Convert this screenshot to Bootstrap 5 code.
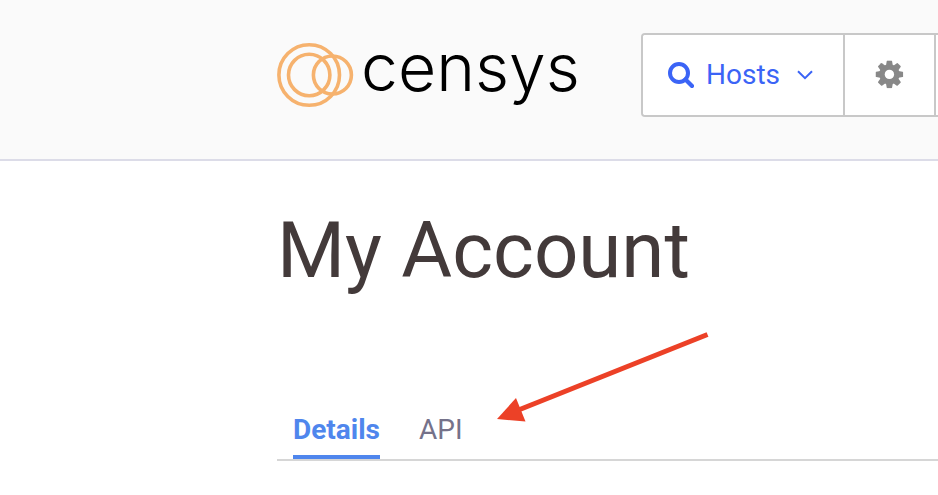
<!DOCTYPE html>
<html lang="en">
<head>
<meta charset="utf-8">
<meta name="viewport" content="width=device-width, initial-scale=1">
<title>My Account</title>
<link href="https://cdn.jsdelivr.net/npm/bootstrap@5.3.0/dist/css/bootstrap.min.css" rel="stylesheet">
<style>
  body { font-family: Roboto, "Liberation Sans", sans-serif; font-size: 28px; line-height: 36px; background: #fff; }
  .site-header { background: #fafafa; border-bottom: 2px solid #dcdce8; padding: 33px 0 42px 277px; }
  .brand { width: 364px; gap: 6px; color: #000; }
  .brand:hover { color: #000; }
  .wordmark { font-family: Inter, "DejaVu Sans", sans-serif; font-weight: 300; font-size: 66px; line-height: 68px; padding-bottom: 16px; }
  .search-group { height: 84px; border: 2px solid #c8c8c8; border-right: 0; border-radius: 4px 0 0 4px; background: #fff; min-width: 0; overflow: hidden; }
  .search-group button { border: 0; border-right: 2px solid #c8c8c8; background: #fff; }
  .hosts-btn { padding: 0 30px 0 25px; color: #3b64f6; }
  .hosts-btn span { margin: 0 17px 0 12px; }
  .gear-btn { width: 91px; }
  .search-group input { border: 0; padding: 0; min-width: 0; width: 0; }
  .page-main { padding: 46px 0 0 277px; }
  .page-title { font-size: 78px; line-height: 88px; font-weight: 450; color: #433a3a; }
  .account-tabs { margin-top: 110px; padding-left: 16px; gap: 39px; border-bottom: 2px solid #d6d6d6; }
  .account-tabs a { padding: 7px 0; border-bottom: 4px solid transparent; color: #75728a; text-decoration: none; }
  .account-tabs a.active { color: #4f86ed; font-weight: 700; border-color: #4f86ed; }
  .pointer-arrow { left: 490px; top: 325px; pointer-events: none; }
</style>
<script src="https://cdn.jsdelivr.net/npm/bootstrap@5.3.0/dist/js/bootstrap.bundle.min.js"></script>
</head>
<body class="position-relative">
<header class="site-header d-flex">
  <a href="#" class="brand d-flex align-items-center flex-shrink-0 text-decoration-none">
    <svg width="78" height="66" viewBox="0 0 78 66" fill="none" stroke="#f6b26e" stroke-width="3.6" aria-hidden="true">
      <circle cx="32.2" cy="33" r="30.3"/><circle cx="32.2" cy="33" r="20.7"/><circle cx="55.4" cy="33" r="19"/>
    </svg>
    <span class="wordmark">censys</span>
  </a>
  <form class="search-group d-flex flex-fill">
    <button type="button" class="hosts-btn d-flex align-items-center flex-shrink-0">
      <svg width="26" height="26" viewBox="0 0 26 26" fill="none" stroke="currentColor" aria-hidden="true">
        <circle cx="11" cy="11" r="9" stroke-width="4"/><path d="M17.5 17.5 24 24" stroke-width="4.2" stroke-linecap="round"/>
      </svg>
      <span>Hosts</span>
      <svg width="16" height="10" viewBox="0 0 16 10" fill="none" stroke="currentColor" stroke-width="2" aria-hidden="true"><path d="M1 1.2 8 8.2 15 1.2"/></svg>
    </button>
    <button type="button" class="gear-btn d-flex align-items-center justify-content-center flex-shrink-0 p-0" aria-label="Search settings">
      <svg width="30" height="30" viewBox="-14.4 -14.4 30 30" fill="#888" aria-hidden="true">
        <defs><mask id="hub"><rect x="-14" y="-14" width="28" height="28" fill="#fff"/><circle r="4.7" fill="#000"/></mask></defs>
        <g mask="url(#hub)">
          <circle r="10.2"/>
          <path id="tooth" d="M-3.4-9-2.7-13.2Q-2.6-13.8-2-13.8H2Q2.6-13.8 2.7-13.2L3.4-9Z"/>
          <use href="#tooth" transform="rotate(45)"/><use href="#tooth" transform="rotate(90)"/><use href="#tooth" transform="rotate(135)"/><use href="#tooth" transform="rotate(180)"/><use href="#tooth" transform="rotate(225)"/><use href="#tooth" transform="rotate(270)"/><use href="#tooth" transform="rotate(315)"/>
        </g>
      </svg>
    </button>
    <input type="search" class="flex-fill" aria-label="Search hosts">
  </form>
</header>
<main class="page-main">
  <h1 class="page-title m-0">My Account</h1>
  <nav class="account-tabs d-flex" aria-label="Account">
    <a href="#details" class="active" aria-current="page">Details</a>
    <a href="#api">API</a>
  </nav>
</main>
<svg class="pointer-arrow position-absolute" width="225" height="105" viewBox="490 325 225 105" aria-hidden="true">
  <path d="M707.5 334.5 516 411" stroke="#ec4127" stroke-width="5"/><path d="M497 419 516 398 525.5 421.5Z" fill="#ec4127"/>
</svg>
</body>
</html>
